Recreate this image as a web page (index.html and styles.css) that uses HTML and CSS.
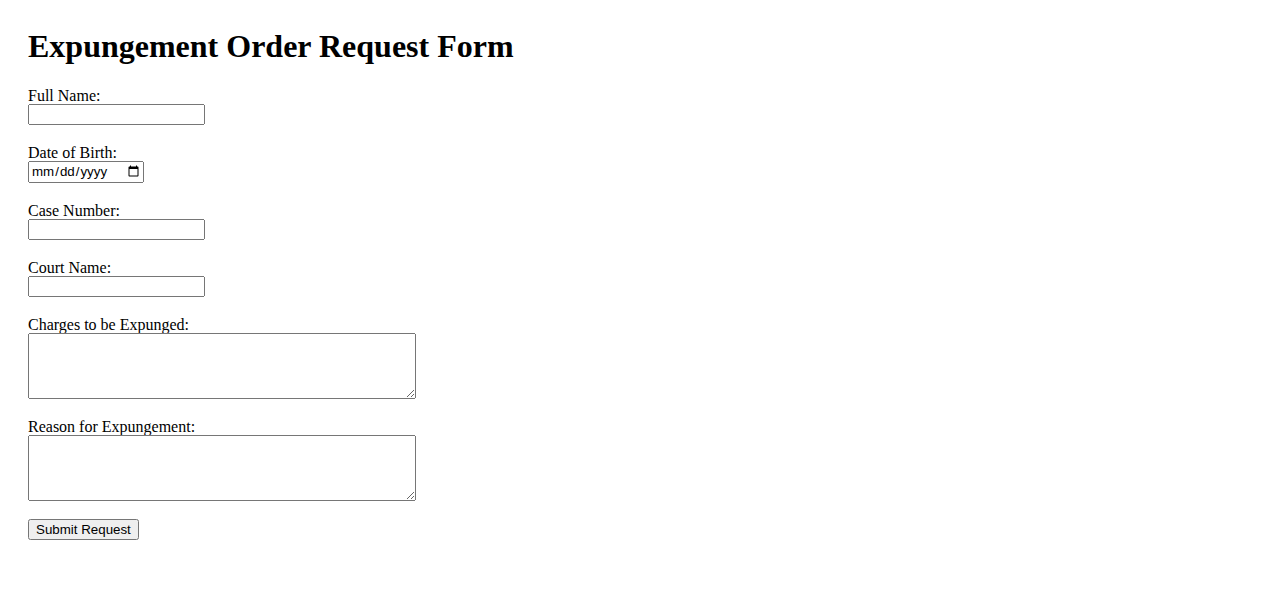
FILE: index.html
```html
<!DOCTYPE html>
<html lang="en">
<head>
<meta charset="utf-8">
<title>Expungement Order Request Form</title>
<link rel="stylesheet" href="styles.css">
</head>
<body>
<h1 class="title">Expungement Order Request Form</h1>
<form class="form">
<label for="name" class="label">Full Name:</label><br>
<input type="text" id="name" class="field"><br><br>
<label for="dob" class="label">Date of Birth:</label><br>
<input type="date" id="dob" class="field date"><br><br>
<label for="case" class="label">Case Number:</label><br>
<input type="text" id="case" class="field"><br><br>
<label for="court" class="label">Court Name:</label><br>
<input type="text" id="court" class="field"><br><br>
<label for="charges" class="label">Charges to be Expunged:</label><br>
<textarea id="charges" class="area" rows="4" cols="50"></textarea><br><br>
<label for="reason" class="label">Reason for Expungement:</label><br>
<textarea id="reason" class="area" rows="4" cols="50"></textarea><br><br>
<button type="submit" class="submit">Submit Request</button>
</form>
</body>
</html>
```

FILE: styles.css
```css
body {
  margin: 8px;
  padding: 20px;
  font-family: "Liberation Serif", "Times New Roman", serif;
  font-size: 16px;
  line-height: 18px;
  color: #000;
  background: #fff;
}
.title {
  font-size: 32px;
  line-height: 37px;
  font-weight: bold;
  margin: 0 0 21px;
}
.form {
  margin: 0;
}
.label {
  line-height: 16px;
  vertical-align: -1px;
}
.field {
  font-family: "Liberation Sans", Arial, sans-serif;
  font-size: 13.333px;
  box-sizing: border-box;
  width: 177px;
  height: 21px;
  margin: 0;
  vertical-align: top;
}
.date {
  width: 116px;
  height: 22px;
}
.area {
  font-family: "Liberation Mono", monospace;
  font-size: 13.333px;
  box-sizing: border-box;
  width: 388px;
  height: 66px;
  margin: 0;
  vertical-align: top;
}
.submit {
  font-family: "Liberation Sans", Arial, sans-serif;
  font-size: 13.333px;
  box-sizing: border-box;
  height: 21px;
  margin: 0;
  vertical-align: top;
}
```
